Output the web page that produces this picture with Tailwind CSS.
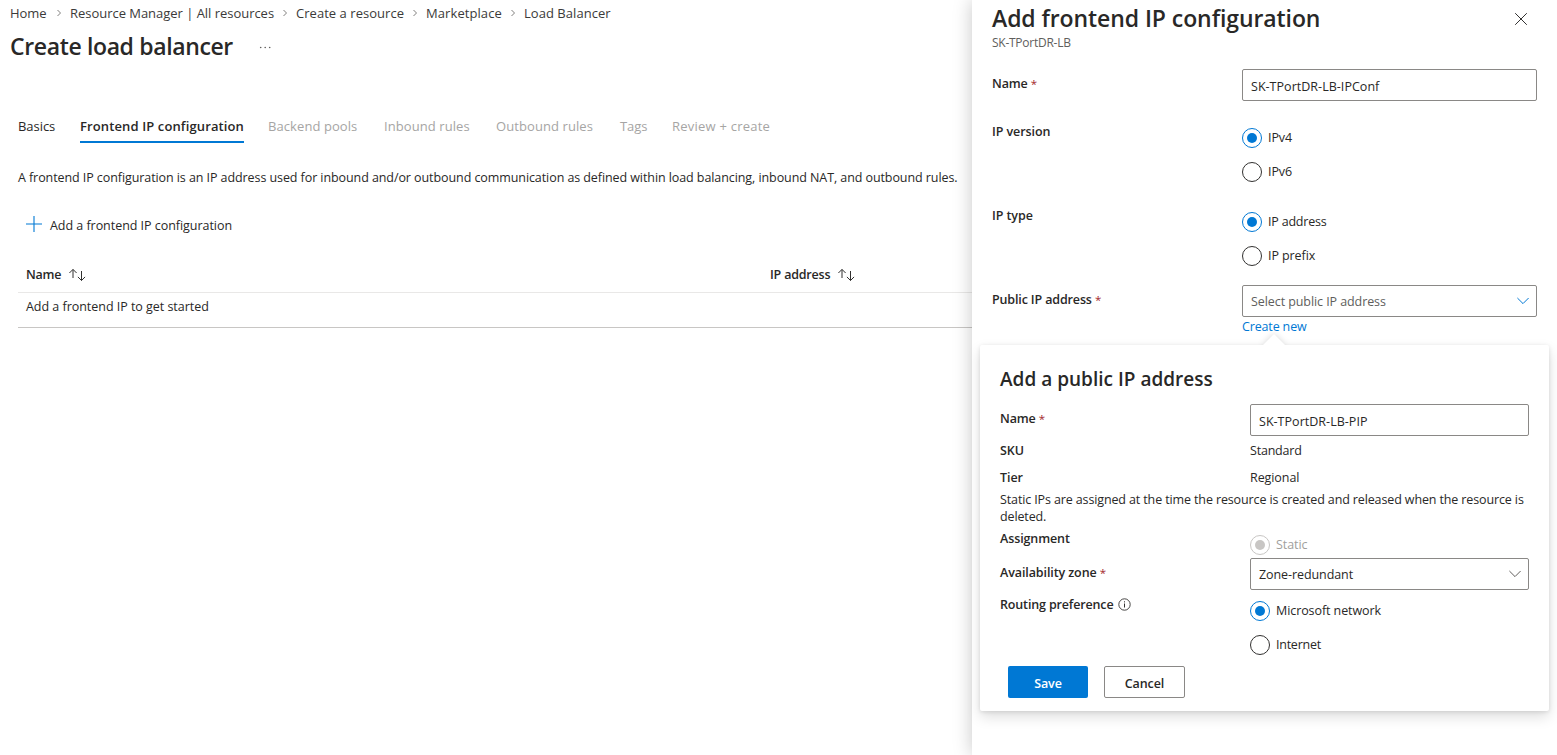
<!DOCTYPE html>
<html lang="en">
<head>
<meta charset="utf-8">
<title>Create load balancer</title>
<script src="https://cdn.jsdelivr.net/npm/@tailwindcss/browser@4"></script>
</head>
<body class="bg-white">
<div class="flex h-[755px] w-[1557px] overflow-hidden bg-white font-['Open_Sans','Noto_Sans',sans-serif] text-[12.5px] leading-[17px] tracking-[-0.08px] whitespace-nowrap text-[#292827]">
  <main class="w-[972px] shrink-0">
    <nav class="flex h-[27px] items-center pl-[10px] text-[13px] text-[#3b3a39]">
      <span class="w-[46px]">Home</span>
      <svg class="mr-[8px] h-[8px] w-[6px] -translate-y-px" viewBox="0 0 6 8" fill="none" stroke="#605e5c" stroke-width=".8"><path d="M1.500 1 4.500 4l-3 3"/></svg>
      <span class="w-[212px] tracking-[-0.03px]">Resource Manager | All resources</span>
      <svg class="mr-[8px] h-[8px] w-[6px] -translate-y-px" viewBox="0 0 6 8" fill="none" stroke="#605e5c" stroke-width=".8"><path d="M1.500 1 4.500 4l-3 3"/></svg>
      <span class="w-[116px] tracking-[0.04px]">Create a resource</span>
      <svg class="mr-[8px] h-[8px] w-[6px] -translate-y-px" viewBox="0 0 6 8" fill="none" stroke="#605e5c" stroke-width=".8"><path d="M1.500 1 4.500 4l-3 3"/></svg>
      <span class="w-[84px] tracking-[0.08px]">Marketplace</span>
      <svg class="mr-[8px] h-[8px] w-[6px] -translate-y-px" viewBox="0 0 6 8" fill="none" stroke="#605e5c" stroke-width=".8"><path d="M1.500 1 4.500 4l-3 3"/></svg>
      <span class="tracking-[0.04px]">Load Balancer</span>
    </nav>
    <div class="flex h-[40px] items-center pl-[10px]">
      <h1 class="w-[249px] pb-[2px] text-[23px] leading-[32px] font-semibold tracking-[-0.36px]"><span>Create load balancer</span></h1>
      <svg class="h-[3px] w-[12px]" viewBox="0 0 12 3" fill="#605e5c"><circle cx="1.700" cy="1.500" r=".8"/><circle cx="6.200" cy="1.500" r=".8"/><circle cx="10.700" cy="1.500" r=".8"/></svg>
    </div>
    <div class="mt-[43px] flex h-[33px] pl-[18px] pt-[8px] text-[13px] tracking-[0.08px] text-[#a6a5a4]">
      <div class="w-[62px] tracking-[-0.05px] text-[#292827]"><span>Basics</span></div>
      <div class="mr-[24px] h-[25px] w-[164px] border-b-2 border-[#0078d4] font-semibold tracking-[0.12px] text-[#292827]"><span>Frontend IP configuration</span></div>
      <div class="w-[116px]"><span>Backend pools</span></div>
      <div class="w-[112px]"><span>Inbound rules</span></div>
      <div class="w-[124px]"><span>Outbound rules</span></div>
      <div class="w-[52px] tracking-[-0.1px]"><span>Tags</span></div>
      <div class="tracking-[0.23px]"><span>Review + create</span></div>
    </div>
    <p class="mt-[26px] pl-[18px]"><span>A frontend IP configuration is an IP address used for inbound and/or outbound communication as defined within load balancing, inbound NAT, and outbound rules.</span></p>
    <div class="mt-[31px] flex h-[17px] items-center pl-[26px] tracking-[-0.04px]">
      <svg class="mr-[8px] mb-[3px] h-[16px] w-[16px]" viewBox="0 0 16 16"><path d="M0 8h16M8 0v16" stroke="#0078d4" stroke-width="1.100" fill="none"/></svg>
      <span>Add a frontend IP configuration</span>
    </div>
    <div class="mt-[24px] ml-[18px] flex h-[35px] items-center border-b border-[#e9e8e7] pb-[2px] pl-[8px] font-semibold">
      <span class="w-[43px] tracking-[-0.25px]">Name</span>
      <svg class="mr-[684px] h-[14px] w-[17px]" viewBox="0 0 17 14" fill="none" stroke="#323130" stroke-width="1"><path d="M4 11V2.500M.4 6 4 2.400l3.600 3.600M12.500 4v9.500M8.900 9.900l3.600 3.600 3.600-3.600"/></svg>
      <span class="w-[68px] tracking-[-0.2px]">IP address</span>
      <svg class="h-[14px] w-[17px]" viewBox="0 0 17 14" fill="none" stroke="#323130" stroke-width="1"><path d="M4 11V2.500M.4 6 4 2.400l3.600 3.600M12.500 4v9.500M8.900 9.900l3.600 3.600 3.600-3.600"/></svg>
    </div>
    <div class="ml-[18px] h-[35px] border-b border-[#c8c6c4] pt-[5px] pl-[8px] tracking-[-0.03px]"><span>Add a frontend IP to get started</span></div>
  </main>

  <aside class="relative w-[585px] shrink-0 bg-white pl-[20px] shadow-[0_0_18px_rgba(0,0,0,0.22)]">
    <header class="flex h-[34px]">
      <h2 class="w-[523px] pt-[2px] text-[23px] leading-[32px] font-semibold"><span>Add frontend IP configuration</span></h2>
      <svg class="mt-[13px] h-[12px] w-[12px]" viewBox="0 0 12 12" fill="none" stroke="#323130" stroke-width="1"><path d="m.200.200 11.600 11.600M11.800.200.200 11.800"/></svg>
    </header>
    <p class="h-[35px] text-[12px] tracking-[-0.26px] text-[#605e5c]"><span>SK-TPortDR-LB</span></p>
    <div class="flex h-[54px]">
      <div class="w-[250px] pt-[6px] font-semibold tracking-[-0.15px]"><span>Name</span> <span class="text-[11.5px] leading-none font-normal text-[#a4262c]">*</span></div>
      <div class="flex h-[32px] w-[295px] items-center rounded-[2px] border border-[#8a8886] pt-[2px] pl-[8px] tracking-[0.03px]"><span>SK-TPortDR-LB-IPConf</span></div>
    </div>
    <div class="flex h-[84px]">
      <div class="w-[250px] font-semibold"><span>IP version</span></div>
      <div class="flex flex-col gap-[14px] pt-[5px]">
        <div class="flex h-[20px] items-center gap-[6px]"><i class="flex size-[20px] items-center justify-center rounded-full border border-[#0078d4]"><i class="size-[10px] rounded-full bg-[#0078d4]"></i></i><span class="pb-[2px]">IPv4</span></div>
        <div class="flex h-[20px] items-center gap-[6px]"><i class="size-[20px] rounded-full border border-[#323130]"></i><span class="pb-[2px]">IPv6</span></div>
      </div>
    </div>
    <div class="flex h-[78px]">
      <div class="w-[250px] font-semibold"><span>IP type</span></div>
      <div class="flex flex-col gap-[14px] pt-[5px]">
        <div class="flex h-[20px] items-center gap-[6px]"><i class="flex size-[20px] items-center justify-center rounded-full border border-[#0078d4]"><i class="size-[10px] rounded-full bg-[#0078d4]"></i></i><span class="pb-[2px] tracking-[-0.2px]">IP address</span></div>
        <div class="flex h-[20px] items-center gap-[6px]"><i class="size-[20px] rounded-full border border-[#323130]"></i><span class="pb-[2px]">IP prefix</span></div>
      </div>
    </div>
    <div class="flex">
      <div class="w-[250px] pt-[6px] font-semibold tracking-[-0.14px]"><span>Public IP address</span> <span class="text-[11.5px] leading-none font-normal text-[#a4262c]">*</span></div>
      <div>
        <div class="flex h-[32px] w-[295px] items-center justify-between rounded-[2px] border border-[#8a8886] pr-[7px] pl-[8px] text-[#605e5c]"><span>Select public IP address</span>
          <svg class="h-[8px] w-[12px]" viewBox="0 0 12 8" fill="none" stroke="#0078d4" stroke-width="1"><path d="m.4 1 5.600 5.600L11.600 1"/></svg>
        </div>
        <div class="pt-px tracking-[-0.15px] text-[#0078d4]"><span>Create new</span></div>
      </div>
    </div>

    <section class="absolute top-[345px] left-[8px] h-[366px] w-[569px] rounded-[2px] bg-white pr-[20px] pl-[20px] shadow-[0_6px_14px_rgba(0,0,0,0.13),0_1px_4px_rgba(0,0,0,0.11)]">
      <svg class="absolute top-[-11px] left-[283px] h-[12px] w-[22px] drop-shadow-[0_0_3px_rgba(0,0,0,0.16)]" viewBox="0 0 22 12"><path d="M0 11 11 0l11 11v1H0z" fill="#fff"/></svg>
      <h3 class="relative h-[59px] bg-white pt-[21px] text-[19px] leading-[26px] font-semibold tracking-[0.01px]"><span>Add a public IP address</span></h3>
      <div class="flex h-[38px]">
        <div class="w-[250px] pt-[6px] font-semibold tracking-[-0.15px]"><span>Name</span> <span class="text-[11.5px] leading-none font-normal text-[#a4262c]">*</span></div>
        <div class="flex h-[32px] w-[279px] items-center rounded-[2px] border border-[#8a8886] pt-[2px] pl-[8px] tracking-[0.03px]"><span>SK-TPortDR-LB-PIP</span></div>
      </div>
      <div class="flex h-[27px]"><div class="w-[250px] font-semibold"><span>SKU</span></div><span class="tracking-[-0.2px]">Standard</span></div>
      <div class="flex h-[22px]"><div class="w-[250px] font-semibold"><span>Tier</span></div><span>Regional</span></div>
      <p class="h-[39px] tracking-[-0.125px]"><span>Static IPs are assigned at the time the resource is created and released when the resource is</span><br><span>deleted.</span></p>
      <div class="flex h-[28px]">
        <div class="w-[250px] font-semibold tracking-[-0.1px]"><span>Assignment</span></div>
        <div class="mt-[5px] flex h-[20px] items-center gap-[6px] text-[#a19f9d]"><i class="flex size-[20px] items-center justify-center rounded-full border border-[#c8c6c4]"><i class="size-[10px] rounded-full bg-[#c8c6c4]"></i></i><span class="pb-[2px]">Static</span></div>
      </div>
      <div class="flex h-[38px]">
        <div class="w-[250px] pt-[6px] font-semibold tracking-[-0.1px]"><span>Availability zone</span> <span class="text-[11.5px] leading-none font-normal text-[#a4262c]">*</span></div>
        <div class="flex h-[32px] w-[279px] items-center justify-between rounded-[2px] border border-[#8a8886] pr-[7px] pl-[8px]"><span>Zone-redundant</span>
          <svg class="h-[8px] w-[12px]" viewBox="0 0 12 8" fill="none" stroke="#605e5c" stroke-width="1"><path d="m.4 1 5.600 5.600L11.600 1"/></svg>
        </div>
      </div>
      <div class="flex h-[70px]">
        <div class="flex h-[17px] w-[250px] items-center font-semibold"><span class="w-[118px] tracking-[-0.15px]">Routing preference</span>
          <svg class="h-[13px] w-[13px]" viewBox="0 0 13 13" fill="none" stroke="#323130"><circle cx="6.500" cy="6.500" r="5.700" stroke-width=".9"/><path d="M6.500 5.500v4M6.500 3.300v1.100" stroke-width="1"/></svg>
        </div>
        <div class="flex flex-col gap-[14px] pt-[5px]">
          <div class="flex h-[20px] items-center gap-[6px]"><i class="flex size-[20px] items-center justify-center rounded-full border border-[#0078d4]"><i class="size-[10px] rounded-full bg-[#0078d4]"></i></i><span class="pb-[2px]">Microsoft network</span></div>
          <div class="flex h-[20px] items-center gap-[6px]"><i class="size-[20px] rounded-full border border-[#323130]"></i><span class="pb-[2px] tracking-[-0.25px]">Internet</span></div>
        </div>
      </div>
      <div class="flex gap-[16px] pl-[8px]">
        <button class="h-[32px] w-[80px] rounded-[2px] bg-[#0078d4] pt-[2px] font-semibold text-white"><span>Save</span></button>
        <button class="h-[32px] w-[81px] rounded-[2px] border border-[#8a8886] pt-[2px] font-semibold"><span>Cancel</span></button>
      </div>
    </section>
  </aside>
</div>
</body>
</html>
